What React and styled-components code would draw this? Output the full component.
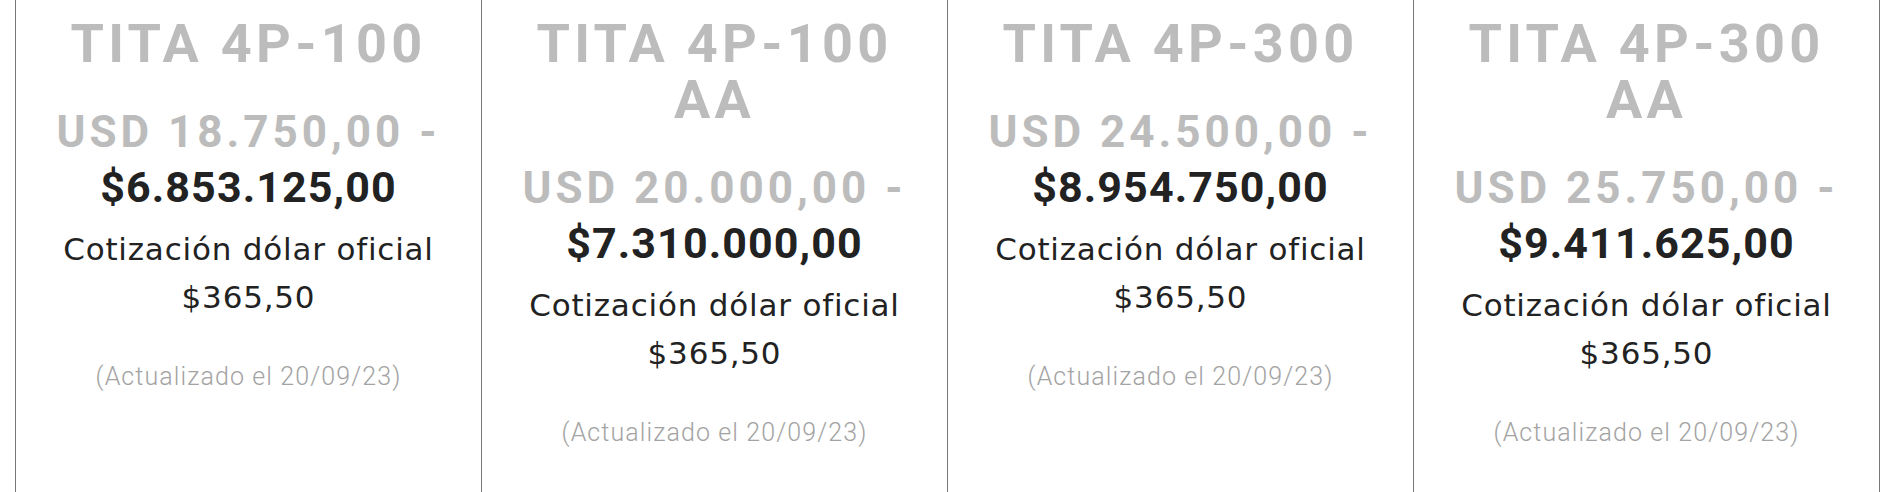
import React from "react";
import styled, { createGlobalStyle } from "styled-components";

const Global = createGlobalStyle`
  html, body { margin: 0; padding: 0; background: #ffffff; }
  body { font-family: "Roboto", "Liberation Sans", sans-serif; }
`;

const Page = styled.div`
  padding-left: 15px;
  height: 492px;
  overflow: hidden;
`;

const Row = styled.div`
  display: grid;
  grid-template-columns: repeat(4, 466px);
  width: max-content;
  height: 492px;
  border-right: 1px solid #777777;
`;

const Column = styled.div`
  box-sizing: border-box;
  border-left: 1px solid #777777;
  padding: 16px 20px 0;
  text-align: center;
  display: flex;
  flex-direction: column;
  align-items: center;
`;

const Title = styled.h2`
  margin: 0;
  font-family: "Roboto", "Liberation Sans", sans-serif;
  font-weight: 700;
  font-size: 54px;
  line-height: 56px;
  letter-spacing: 4.3px;
  color: #bcbcbc;
  text-transform: uppercase;
`;

const Usd = styled.div`
  margin-top: 33px;
  font-family: "Roboto", "Liberation Sans", sans-serif;
  font-weight: 700;
  font-size: 44px;
  line-height: 55px;
  letter-spacing: 4px;
  color: #bcbcbc;
  white-space: nowrap;
`;

const Price = styled.div`
  font-family: "Roboto", "Liberation Sans", sans-serif;
  font-weight: 700;
  font-size: 43px;
  line-height: 55px;
  letter-spacing: 1.1px;
  color: #222222;
  white-space: nowrap;
`;

const Quote = styled.p`
  margin: 10px 0 0;
  font-family: "DejaVu Sans", "Noto Sans", sans-serif;
  font-weight: 400;
  font-size: 31px;
  line-height: 48px;
  letter-spacing: 0.8px;
  color: #222222;
`;

const Updated = styled.p`
  margin: 41px 0 0;
  font-family: "Roboto", "Liberation Sans", sans-serif;
  font-weight: 300;
  font-size: 25px;
  line-height: 30px;
  letter-spacing: 1.1px;
  color: #a3a3a3;
`;

const items = [
  { name: "TITA 4P-100", usd: "USD 18.750,00 -", ars: "$6.853.125,00" },
  { name: "TITA 4P-100 AA", usd: "USD 20.000,00 -", ars: "$7.310.000,00" },
  { name: "TITA 4P-300", usd: "USD 24.500,00 -", ars: "$8.954.750,00" },
  { name: "TITA 4P-300 AA", usd: "USD 25.750,00 -", ars: "$9.411.625,00" },
];

export default function App() {
  return (
    <>
      <Global />
      <Page>
        <Row>
          {items.map((it) => (
            <Column key={it.name}>
              <Title>{it.name}</Title>
              <Usd>{it.usd}</Usd>
              <Price>{it.ars}</Price>
              <Quote>
                Cotización dólar oficial
                <br />
                $365,50
              </Quote>
              <Updated>(Actualizado el 20/09/23)</Updated>
            </Column>
          ))}
        </Row>
      </Page>
    </>
  );
}
